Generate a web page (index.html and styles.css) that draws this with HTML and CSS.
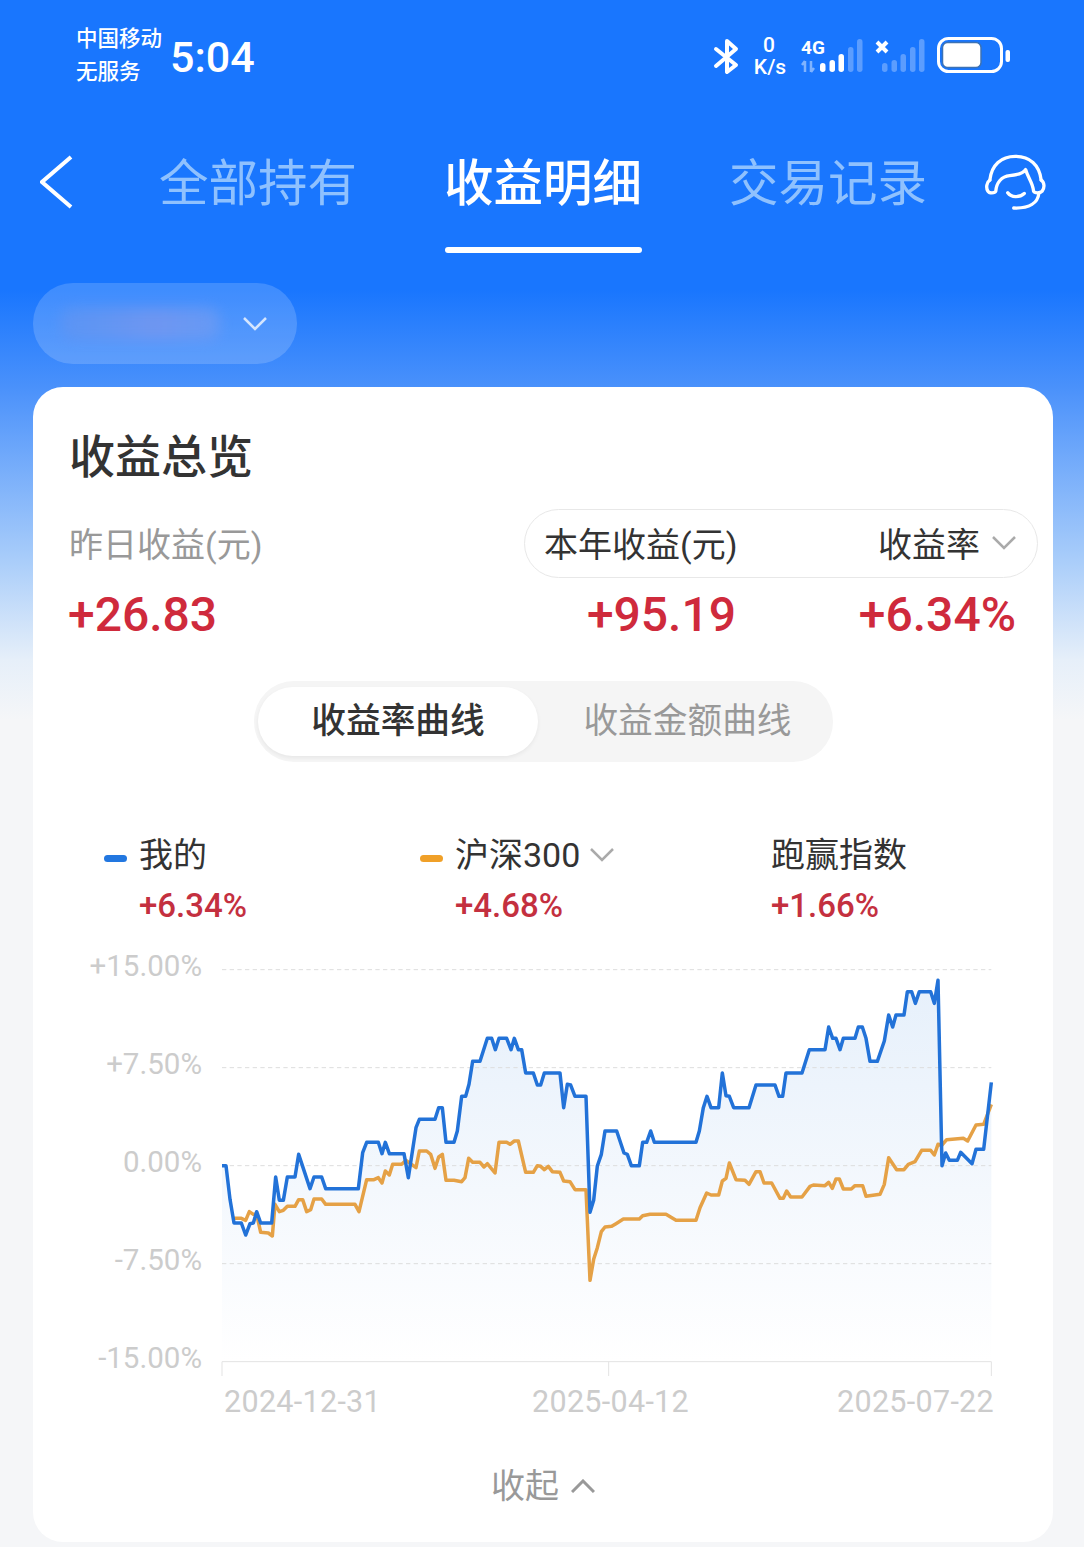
FILE: index.html
```html
<!DOCTYPE html>
<html lang="zh-CN">

<head>
    <meta charset="UTF-8">
    <meta name="viewport" content="width=device-width, initial-scale=1.0">
    <title>收益明细</title>
    <link rel="stylesheet" href="styles.css">
</head>

<body>
    <div class="status">
        <div class="carrier">
            <span>中国移动</span>
            <span>无服务</span>
        </div>
        <span class="time">5:04</span>
        <svg class="status-icons" width="320" height="50" viewBox="700 30 320 50">
            <path class="bt" d="M716 49 736 65 727 72V41L736 49 716 66" />
            <text class="net" x="769" y="52" text-anchor="middle">0</text>
            <text class="net" x="770" y="74" text-anchor="middle">K/s</text>
            <text class="net-type" x="813" y="54" text-anchor="middle">4G</text>
            <path class="net-arrows" d="M805 61v11M802 65l3-4M811 61v11M814 68l-3 4" />
            <rect class="bar" x="820" y="63" width="5.5" height="9" rx="2.7" />
            <rect class="bar" x="829.500" y="60" width="5.500" height="12" rx="2.700" />
            <rect class="bar" x="838.500" y="54" width="5.500" height="18" rx="2.700" />
            <rect class="bar dim" x="848" y="47" width="5.500" height="25" rx="2.700" />
            <rect class="bar dim" x="857" y="39" width="5.500" height="33" rx="2.700" />
            <path class="no-sim" d="M877 42l10 10M887 42l-10 10" />
            <rect class="bar dim" x="882" y="63" width="5.500" height="9" rx="2.700" />
            <rect class="bar dim" x="891.500" y="60" width="5.500" height="12" rx="2.700" />
            <rect class="bar dim" x="900.500" y="54" width="5.500" height="18" rx="2.700" />
            <rect class="bar dim" x="910" y="47" width="5.500" height="25" rx="2.700" />
            <rect class="bar dim" x="919" y="39" width="5.500" height="33" rx="2.700" />
            <rect class="batt" x="938.500" y="38.500" width="63" height="33" rx="10" />
            <rect class="batt-level" x="942.500" y="42.500" width="38.500" height="25" rx="5" />
            <rect class="bar" x="1005.500" y="50" width="4.500" height="12" rx="2" />
        </svg>
    </div>

    <div class="tabs">
        <svg class="back" width="34" height="54" viewBox="38 155 34 54">
            <polyline points="69,157 40,182 69,207" />
        </svg>
        <div class="tab-list">
            <div class="tab">全部持有</div>
            <div class="tab active">收益明细</div>
            <div class="tab">交易记录</div>
        </div>
        <svg class="headset" width="65" height="58" viewBox="340 400 195 175">
            <path d="M360 482C365 435 395 410 437 410 480 410 510 435 515 482" />
            <path d="M360 482C350 488 348 505 354 515 358 522 375 522 378 515 380 490 395 470 420 468 445 466 462 460 468 450 475 475 490 490 492 515 495 522 512 522 518 515 526 505 525 488 515 482" />
            <path d="M508 522C505 550 480 568 432 566" />
            <path d="M414 520C425 535 450 535 464 522" />
        </svg>
    </div>

    <div class="account">
        <div class="account-name"></div>
        <svg class="chevron light" width="24" height="14" viewBox="0 0 24 14">
            <polyline points="1,1 12,12 23,1" />
        </svg>
    </div>

    <div class="card">
        <h1 class="card-title">收益总览</h1>

        <div class="summary">
            <div class="summary-left">
                <div class="summary-label muted">昨日收益(元)</div>
                <div class="money">+26.83</div>
            </div>
            <div class="summary-right">
                <div class="summary-pill">
                    <span>本年收益(元)</span>
                    <span class="pill-select">
                        收益率
                        <svg class="chevron" width="24" height="14" viewBox="0 0 24 14">
                            <polyline points="1,1 12,12 23,1" />
                        </svg>
                    </span>
                </div>
                <div class="summary-values">
                    <div class="money year-money">+95.19</div>
                    <div class="money rate-money">+6.34%</div>
                </div>
            </div>
        </div>

        <div class="segment">
            <div class="segment-item on">收益率曲线</div>
            <div class="segment-item next">收益金额曲线</div>
        </div>

        <div class="legend">
            <div class="legend-item first">
                <div class="legend-head"><i class="dash dash-blue"></i>我的</div>
                <div class="legend-value">+6.34%</div>
            </div>
            <div class="legend-item second">
                <div class="legend-head"><i class="dash dash-orange"></i>沪深300
                    <svg class="chevron" width="24" height="14" viewBox="0 0 24 14">
                        <polyline points="1,1 12,12 23,1" />
                    </svg>
                </div>
                <div class="legend-value">+4.68%</div>
            </div>
            <div class="legend-item third">
                <div class="legend-head">跑赢指数</div>
                <div class="legend-value">+1.66%</div>
            </div>
        </div>

        <div class="chart">
            <div class="y-labels">
                <span>+15.00%</span>
                <span>+7.50%</span>
                <span>0.00%</span>
                <span>-7.50%</span>
                <span>-15.00%</span>
            </div>
            <!-- 座標 1 單位 = 1/3 px -->
            <svg class="plot" width="774" height="411" viewBox="60 45 2322 1233">
                <defs>
                    <linearGradient id="area" x1="0" y1="0" x2="0" y2="1">
                        <stop offset="0" stop-color="#e6f0fb" />
                        <stop offset="0.55" stop-color="#f4f8fd" />
                        <stop offset="1" stop-color="#ffffff" />
                    </linearGradient>
                </defs>
                <polygon class="area" points="66,644 78,644 90,745 102,816 124,816 137,852 150,818 160,816 170,782 182,816 215,816 227,678 238,748 250,748 262,678 285,678 296,610 330,713 342,678 365,678 377,713 475,713 488,605 500,574 535,574 546,608 556,574 568,608 612,608 625,680 648,530 658,505 705,505 716,470 727,470 738,574 762,574 772,540 785,436 797,436 807,400 818,331 840,331 862,262 875,262 886,296 897,262 920,262 933,296 943,262 955,296 965,296 977,366 1000,366 1012,402 1022,402 1033,366 1080,366 1091,470 1102,400 1112,402 1125,436 1158,436 1170,784 1181,748 1192,645 1204,610 1215,540 1250,540 1272,606 1282,610 1294,644 1318,644 1328,574 1340,574 1352,540 1363,574 1488,574 1498,540 1510,470 1521,436 1533,470 1556,470 1567,366 1578,434 1588,436 1601,470 1647,470 1668,402 1725,402 1737,436 1748,436 1758,366 1806,366 1828,296 1875,296 1886,228 1898,262 1908,262 1920,296 1930,262 1965,262 1975,228 1987,228 1998,262 2010,331 2032,331 2053,270 2066,192 2078,228 2088,192 2112,192 2122,122 2135,122 2146,157 2158,122 2192,122 2203,157 2214,88 2226,644 2237,606 2248,628 2272,628 2282,604 2316,638 2328,595 2351,595 2374,394 2374,1232 66,1232" />
                <g class="grid">
                    <line x1="66" y1="56" x2="2374" y2="56" />
                    <line x1="66" y1="350" x2="2374" y2="350" />
                    <line x1="66" y1="644" x2="2374" y2="644" />
                    <line x1="66" y1="938" x2="2374" y2="938" />
                </g>
                <path class="axis" d="M66 1275V1232H2374V1275M1226 1232V1275" />
                <polyline class="line line-orange" points="102,802 124,802 137,808 148,782 160,790 170,790 182,844 205,846 217,855 225,760 238,782 250,778 262,766 285,766 296,746 308,746 320,782 332,776 342,744 365,744 377,760 465,760 477,782 500,686 522,686 535,680 546,696 556,660 568,672 578,640 605,640 618,628 648,650 658,600 680,600 692,610 705,652 716,618 727,610 738,688 762,688 785,692 795,680 806,622 818,634 840,634 852,648 862,638 885,666 897,574 920,574 930,580 943,570 955,570 977,664 1000,664 1012,644 1022,646 1033,656 1045,646 1057,662 1080,664 1091,690 1110,692 1125,716 1158,716 1170,988 1181,925 1192,890 1204,842 1215,828 1235,826 1248,818 1270,804 1318,804 1328,794 1350,790 1398,790 1428,808 1488,808 1500,770 1520,726 1533,732 1556,732 1567,690 1578,682 1588,636 1608,686 1635,688 1647,700 1668,662 1680,662 1692,696 1715,696 1740,742 1750,742 1760,720 1772,738 1806,738 1830,706 1840,702 1875,704 1886,694 1897,712 1908,684 1918,684 1930,714 1954,714 1965,704 1988,704 1998,736 2040,730 2053,700 2066,620 2090,656 2112,656 2125,640 2145,632 2165,598 2192,598 2203,612 2214,580 2226,582 2240,566 2290,562 2303,570 2328,522 2351,520 2374,460" />
                <polyline class="line line-blue" points="66,644 78,644 90,745 102,816 124,816 137,852 150,818 160,816 170,782 182,816 215,816 227,678 238,748 250,748 262,678 285,678 296,610 330,713 342,678 365,678 377,713 475,713 488,605 500,574 535,574 546,608 556,574 568,608 612,608 625,680 648,530 658,505 705,505 716,470 727,470 738,574 762,574 772,540 785,436 797,436 807,400 818,331 840,331 862,262 875,262 886,296 897,262 920,262 933,296 943,262 955,296 965,296 977,366 1000,366 1012,402 1022,402 1033,366 1080,366 1091,470 1102,400 1112,402 1125,436 1158,436 1170,784 1181,748 1192,645 1204,610 1215,540 1250,540 1272,606 1282,610 1294,644 1318,644 1328,574 1340,574 1352,540 1363,574 1488,574 1498,540 1510,470 1521,436 1533,470 1556,470 1567,366 1578,434 1588,436 1601,470 1647,470 1668,402 1725,402 1737,436 1748,436 1758,366 1806,366 1828,296 1875,296 1886,228 1898,262 1908,262 1920,296 1930,262 1965,262 1975,228 1987,228 1998,262 2010,331 2032,331 2053,270 2066,192 2078,228 2088,192 2112,192 2122,122 2135,122 2146,157 2158,122 2192,122 2203,157 2214,88 2226,644 2237,606 2248,628 2272,628 2282,604 2316,638 2328,595 2351,595 2374,394" />
            </svg>
        </div>

        <div class="dates">
            <span class="date-first">2024-12-31</span>
            <span class="date-mid">2025-04-12</span>
            <span>2025-07-22</span>
        </div>

        <div class="collapse">
            收起
            <svg class="chevron up" width="24" height="14" viewBox="0 0 24 14">
                <polyline points="1,13 12,2 23,13" />
            </svg>
        </div>
    </div>
</body>

</html>
```

FILE: styles.css
```css
* {
    box-sizing: border-box;
    padding: 0;
    margin: 0;
}

body {
    width: 1084px;
    height: 1547px;
    overflow: hidden;
    font-family: Roboto, "Noto Sans CJK SC", sans-serif;
    background: linear-gradient(180deg, #1976fe 0, #1976fe 290px, #4a91fb 387px, #a9cdfa 560px, #e6eff9 660px, #f5f6f8 720px);
}

/* 狀態列 */
.status {
    display: flex;
    align-items: flex-start;
    height: 112px;
    padding: 22px 0 0 76px;
    color: #fff;
}

.carrier {
    display: flex;
    flex-direction: column;
    font-size: 21.5px;
    font-weight: 500;
    line-height: 33px;
}

.time {
    margin: 2px 0 0 8px;
    font-size: 43px;
    font-weight: 500;
    line-height: 66px;
}

.status-icons {
    margin: 8px 64px 0 auto;
}

.bt,
.net-arrows,
.no-sim {
    fill: none;
    stroke: #fff;
}

.bt {
    stroke-width: 4;
    stroke-linejoin: round;
    stroke-linecap: round;
}

.net {
    fill: #fff;
    font-size: 21px;
    font-weight: 500;
}

.net-type {
    fill: #fff;
    font-size: 19px;
    font-weight: 700;
}

.net-arrows {
    stroke-width: 2.5;
    opacity: 0.45;
}

.no-sim {
    stroke-width: 4;
}

.bar {
    fill: #fff;
}

.bar.dim {
    fill: #5c9dfe;
}

.batt {
    fill: none;
    stroke: #fff;
    stroke-width: 3;
}

.batt-level {
    fill: #fff;
    stroke: #3c72b4;
    stroke-width: 1.5;
}

/* 分頁 */
.tabs {
    display: flex;
    align-items: flex-start;
    height: 141px;
    padding: 41px 0 0 40px;
}

.back {
    margin-top: 2px;
}

.back polyline {
    fill: none;
    stroke: #fff;
    stroke-width: 4;
}

.tab-list {
    display: flex;
    gap: 91px;
    margin-left: 87px;
}

.tab {
    display: flex;
    flex-direction: column;
    align-items: center;
    width: 194px;
    color: #8fc1fe;
    font-size: 49.5px;
    line-height: 62px;
    white-space: nowrap;
}

.tab::after {
    content: "";
    width: 197px;
    height: 6px;
    margin-top: 32px;
    border-radius: 3px;
}

.tab.active {
    color: #fff;
    font-weight: 500;
}

.tab.active::after {
    background-color: #fff;
}

.headset {
    margin: 0 0 0 58px;
}

.headset path {
    fill: none;
    stroke: #fff;
    stroke-width: 10;
    stroke-linecap: round;
    stroke-linejoin: round;
}

/* 帳戶選擇 */
.account {
    display: flex;
    align-items: center;
    width: 264px;
    height: 81px;
    margin: 30px 0 0 33px;
    padding-left: 27px;
    border-radius: 40px;
    background-color: rgba(255, 255, 255, 0.17);
}

.account-name {
    width: 160px;
    height: 32px;
    border-radius: 12px;
    background: linear-gradient(90deg, #5f94f2, #6c96ee 30%, #7d97ec 60%, #6f9cf2);
    filter: blur(7px);
    opacity: 0.7;
}

.chevron {
    fill: none;
    flex: none;
}

.chevron polyline {
    fill: none;
    stroke: #aaa;
    stroke-width: 2.5;
}

.chevron.light {
    margin-left: 23px;
}

.chevron.light polyline {
    stroke: #d4e5fe;
}

/* 卡片 */
.card {
    width: 1020px;
    height: 1155px;
    margin: 23px 0 0 33px;
    padding-top: 39px;
    border-radius: 30px;
    background-color: #fff;
}

.card-title {
    padding-left: 36px;
    color: #333;
    font-size: 46px;
    font-weight: 500;
    line-height: 62px;
}

.summary {
    display: flex;
    margin-top: 21px;
    padding-left: 37px;
}

.summary-left {
    width: 454px;
}

.summary-label {
    display: flex;
    align-items: center;
    height: 67px;
    margin-left: -1px;
    font-size: 34px;
}

.muted {
    color: #999;
}

.money {
    margin-top: 6px;
    color: #cf2a3c;
    font-size: 48px;
    font-weight: 500;
    line-height: 66px;
}

.summary-left .money {
    margin-left: -2px;
}

.summary-right {
    width: 514px;
}

.summary-pill {
    display: flex;
    align-items: center;
    justify-content: space-between;
    height: 69px;
    padding: 0 21px 2px 19px;
    border: 1px solid #e8e8e8;
    border-radius: 35px;
    color: #333;
    font-size: 34px;
}

.pill-select {
    display: flex;
    align-items: center;
    gap: 12px;
}

.summary-values {
    display: flex;
}

.summary-values .money {
    margin-top: 4px;
}

.year-money {
    width: 212px;
    text-align: right;
}

.rate-money {
    width: 280px;
    text-align: right;
}

/* 曲線切換 */
.segment {
    display: flex;
    width: 579px;
    height: 81px;
    margin: 33px 0 0 221px;
    padding: 6px 4px;
    border-radius: 40px;
    background-color: #f5f5f5;
}

.segment-item {
    flex: 1;
    color: #999;
    font-size: 34.7px;
    line-height: 69px;
    text-align: center;
}

.segment-item.next {
    padding-left: 8px;
}

.segment-item.on {
    flex: none;
    width: 280px;
    border-radius: 35px;
    background-color: #fff;
    box-shadow: 0 2px 4px rgba(0, 0, 0, 0.06);
    color: #333;
    font-weight: 500;
}

/* 圖例 */
.legend {
    display: flex;
    margin-top: 63px;
    padding-left: 71px;
}

.legend-item.first {
    width: 316px;
}

.legend-item.second {
    width: 351px;
}

.legend-head {
    display: flex;
    align-items: center;
    color: #333;
    font-size: 34px;
    line-height: 60px;
}

.legend-head .chevron {
    margin-left: 10px;
}

.dash {
    width: 23px;
    height: 7px;
    margin: 6px 12px 0 0;
    border-radius: 4px;
}

.dash-blue {
    background-color: #2277e0;
}

.dash-orange {
    background-color: #f0a028;
}

.legend-value {
    padding-left: 35px;
    color: #c4303f;
    font-size: 33px;
    font-weight: 500;
    line-height: 42px;
}

.third .legend-value {
    padding-left: 0;
}

/* 走勢圖 */
.chart {
    display: flex;
    gap: 18px;
    margin-top: 20px;
    padding-left: 15px;
}

.y-labels {
    display: flex;
    flex-direction: column;
    gap: 58px;
    width: 154px;
    margin-top: -1px;
    color: #ccc;
    font-size: 29.5px;
    line-height: 40px;
    text-align: right;
}

.plot {
    display: block;
    margin-top: 19px;
}

.area {
    fill: url(#area);
}

.grid line {
    stroke: #ddd;
    stroke-width: 3;
    stroke-dasharray: 13 10;
}

.axis {
    fill: none;
    stroke: #e3e3e3;
    stroke-width: 3;
}

.line {
    fill: none;
    stroke-width: 10.5;
    stroke-linejoin: round;
}

.line-blue {
    stroke: #2272d8;
}

.line-orange {
    stroke: #e5a146;
}

.dates {
    display: flex;
    margin-top: 4px;
    padding-left: 191px;
    color: #ccc;
    font-size: 30.5px;
    letter-spacing: 0.3px;
    line-height: 40px;
}

.date-first {
    width: 308px;
}

.date-mid {
    width: 305px;
}

.collapse {
    display: flex;
    align-items: center;
    justify-content: center;
    gap: 12px;
    margin-top: 39px;
    color: #999;
    font-size: 34px;
    line-height: 50px;
}

.collapse .chevron polyline {
    stroke: #999;
    stroke-width: 3;
}
```
